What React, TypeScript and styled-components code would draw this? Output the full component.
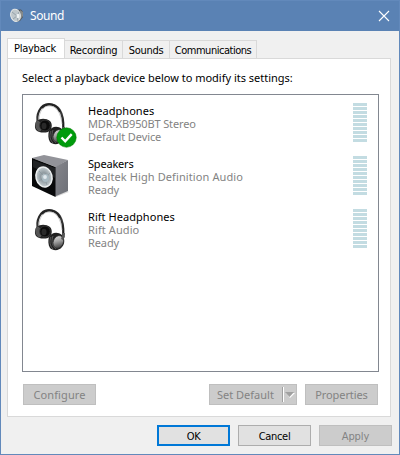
import React from "react";
import styled, { createGlobalStyle } from "styled-components";

const GlobalStyle = createGlobalStyle`
  * { box-sizing: border-box; }
  body { margin: 0; overflow: hidden; }
`;

const Dialog = styled.main`
  width: 400px;
  height: 455px;
  display: flex;
  flex-direction: column;
  border: 1px solid #6289bb;
  background: #f0f0f0;
  color: #000;
  font: 11px/13px "Noto Sans", sans-serif;
`;

const TitleBar = styled.header`
  height: 30px;
  flex: none;
  display: flex;
  align-items: center;
  padding: 0 8px 0 9px;
  background: #5a82b4;
  color: #fff;
`;

const Title = styled.h1`
  flex: 1;
  margin: 0 0 0 6px;
  font: 12px/16px "Noto Sans", sans-serif;
  letter-spacing: -0.4px;
`;

const CloseButton = styled.button`
  width: 14px;
  height: 14px;
  padding: 0;
  border: 0;
  background: none;
  display: grid;
  place-items: center;
`;

const Label = styled.span<{ $spacing?: number }>`
  white-space: nowrap;
  letter-spacing: ${(p) => p.$spacing ?? 0}px;
`;

const Tabs = styled.nav`
  display: flex;
  align-items: flex-end;
  height: 28px;
  flex: none;
  margin: 0 0 -1px 6px;
`;

const Tab = styled.button<{ $width: number; $active?: boolean }>`
  width: ${(p) => p.$width}px;
  height: ${(p) => (p.$active ? 21 : 19)}px;
  padding: ${(p) => (p.$active ? "0 2px 1px 0" : "2px 0 0")};
  text-align: center;
  border: 1px solid #d9d9d9;
  border-left-width: ${(p) => (p.$active ? 1 : 0)}px;
  border-bottom-color: ${(p) => (p.$active ? "#fff" : "#d9d9d9")};
  background: ${(p) => (p.$active ? "#fff" : "#f0f0f0")};
  color: #000;
  font: 11px/13px "DejaVu Sans Condensed", "DejaVu Sans", sans-serif;
`;

const Panel = styled.section`
  width: 384px;
  height: 359px;
  flex: none;
  margin-left: 6px;
  padding: 12px 12px 10px 14px;
  display: flex;
  flex-direction: column;
  border: 1px solid #d9d9d9;
  background: #fff;
`;

const Prompt = styled.p`
  margin: 0 0 10px;
  height: 13px;
`;

const DeviceList = styled.ul`
  width: 357px;
  height: 278px;
  margin: 0;
  padding: 7px 11px 0 8px;
  list-style: none;
  border: 1px solid #828790;
`;

const Device = styled.li`
  display: flex;
  height: 53px;
`;

const DeviceIcon = styled.svg`
  width: 48px;
  height: 48px;
  flex: none;
`;

const DeviceText = styled.div`
  flex: 1;
  display: flex;
  flex-direction: column;
  padding: 2px 0 0 9px;
  color: #838383;
`;

const DeviceName = styled(Label)`
  color: #000;
`;

const Meter = styled.div`
  width: 14px;
  padding-top: 1px;
  display: flex;
  flex-direction: column;
  gap: 1px;
`;

const MeterBar = styled.i`
  height: 3px;
  background: #c3dce2;
`;

const Actions = styled.div`
  display: flex;
  margin: 12px 0 0 1px;
`;

const Button = styled.button<{ $primary?: boolean; $width?: number; $tahoma?: boolean }>`
  width: ${(p) => p.$width ?? 73}px;
  height: 21px;
  padding: ${(p) => (p.$tahoma ? "2px 0 0" : "0")};
  display: flex;
  align-items: center;
  justify-content: center;
  border: ${(p) => (p.$primary ? "2px solid #0078d7" : "1px solid #adadad")};
  background: #e1e1e1;
  color: #000;
  font: 11px/13px ${(p) => (p.$tahoma ? '"DejaVu Sans Condensed", "DejaVu Sans"' : '"Noto Sans"')}, sans-serif;
  &:disabled {
    border-color: #bfbfbf;
    background: #ccc;
    color: #838383;
  }
`;

const SplitButton = styled(Button)`
  margin: 0 8px 0 auto;
  justify-content: flex-start;
  padding-left: 7px;
`;

const SplitMark = styled.svg`
  width: 14px;
  height: 15px;
  margin-left: auto;
`;

const Footer = styled.footer`
  display: flex;
  justify-content: flex-end;
  gap: 8px;
  padding: 8px 7px 0 0;
`;

function SoundIcon() {
  return (
    <svg width="14" height="16" viewBox="0 0 14 16">
      <path d="M5 2 11 1.5 13 4v5L10 13 6 14Z" fill="#4e5356" />
      <path d="m10 2 3 2v4l-3 4Z" fill="#85898a" />
      <ellipse cx="5.5" cy="7.3" rx="4.8" ry="6.2" transform="rotate(-14 5.5 7.3)" fill="#bfc7cb" stroke="#e4e6e5" />
      <path d="m2 4 5 4-4 3M7 8l2-4M7 8l1 5" stroke="#95a2aa" fill="none" />
      <ellipse cx="8" cy="8" rx="1.5" ry="2.3" fill="#edf1f2" />
    </svg>
  );
}

function Headphones({ checked }: { checked?: boolean }) {
  const id = checked ? "checked" : "plain";
  return (
    <DeviceIcon viewBox="0 0 48 48">
      <defs>
        <linearGradient id={`band-${id}`} x2="1" y2="1">
          <stop stopColor="#171717" />
          <stop offset=".5" stopColor="#484848" />
          <stop offset="1" stopColor="#161616" />
        </linearGradient>
        <linearGradient id={`cup-${id}`} x2=".6" y2="1">
          <stop stopColor="#e8e8e8" />
          <stop offset=".5" stopColor="#a6a6a6" />
          <stop offset="1" stopColor="#444" />
        </linearGradient>
      </defs>
      <path d="M7.2 22C4.500 13 9 2 18 2c9 0 15 8 14.300 25" fill="none" stroke={`url(#band-${id})`} strokeWidth="2.200" />
      <path d="M11 6c5-6 15-4 18 4" fill="none" stroke="#222" strokeWidth="2" />
      <path d="M8.500 21C7 13 10 5 17 4c8-1 13 7 14 18" fill="none" stroke="#999" strokeWidth=".5" />
      <path d="M6 19c3-3 9-3 13 0 3 3 2 9-2 11-4 1-9 1-12-2-2-3-1-7 1-9Z" fill="#222" />
      <ellipse cx="7.500" cy="24" rx="3" ry="5.500" transform="rotate(-15 7.5 24)" fill="#555" />
      <ellipse cx="14" cy="23.500" rx="5.300" ry="5.500" fill="#0b0b0b" stroke="#333" />
      <ellipse cx="13" cy="24" rx="2.500" ry="3.200" fill="#292929" />
      <path d="M18 29c2-4 8-6 13-2 3 3 3 9 0 12-3 4-9 4-12 1-2-3-2-8-1-11Z" fill="#202020" />
      <path d="M20 29c-2 4-1 9 2 12M22 28c-2 5-1 10 3 13" fill="none" stroke="#686868" strokeWidth=".8" />
      <ellipse cx="27.300" cy="34" rx="5" ry="6.500" transform="rotate(22 27.3 34)" fill={`url(#cup-${id})`} stroke="#303030" strokeWidth=".6" />
      <path d="M31.500 25h2.400v4l-2 3-1.800-1Z" fill="#555" />
      {checked && (
        <g>
          <circle cx="35.500" cy="35.500" r="9.700" fill="#009b0c" stroke="#008000" strokeWidth=".6" />
          <path d="m30.500 35.500 3.700 3.800 6.500-7.200" fill="none" stroke="#fff" strokeWidth="2.400" />
        </g>
      )}
    </DeviceIcon>
  );
}

function Speaker() {
  return (
    <DeviceIcon viewBox="0 0 48 48">
      <defs>
        <linearGradient id="speaker-side" x2="1" y2="1">
          <stop stopColor="#85868c" />
          <stop offset="1" stopColor="#6e7077" />
        </linearGradient>
        <radialGradient id="cone">
          <stop stopColor="#edf1f2" />
          <stop offset=".4" stopColor="#8d989e" />
          <stop offset="1" stopColor="#c7cfd2" />
        </radialGradient>
      </defs>
      <path d="m24 41 12-5 2 1-13 5Z" fill="#ddd" />
      <path d="m1 3 12-3 24 5-12 7Z" fill="#929399" />
      <path d="m24 12 13-7v31l-13 5.500Z" fill="url(#speaker-side)" />
      <path d="m1 3 23.500 9v30L1 31Z" fill="#08090a" />
      <path d="m2 5 22 8v10L2 12Z" fill="#202224" />
      <ellipse cx="13" cy="22" rx="8" ry="10" transform="rotate(-14 13 22)" fill="url(#cone)" stroke="#edf0f1" strokeWidth="1.500" />
      <path d="m8 16 6 6-6 4M14 24l5-6M14 24l2 6" fill="none" stroke="#87949b" strokeWidth=".7" />
      <ellipse cx="14.500" cy="23" rx="3.500" ry="4" fill="#a9bac2" />
      <ellipse cx="14" cy="22" rx="1.900" ry="2" fill="#e1e9ed" />
    </DeviceIcon>
  );
}

const devices = [
  { name: "Headphones", model: "MDR-XB950BT Stereo", status: "Default Device", icon: <Headphones checked />, spacing: [0.05, -0.15, -0.1] },
  { name: "Speakers", model: "Realtek High Definition Audio", status: "Ready", icon: <Speaker />, spacing: [-0.2, 0.1, -0.1] },
  { name: "Rift Headphones", model: "Rift Audio", status: "Ready", icon: <Headphones />, spacing: [0.05, 0.1, -0.1] },
];

export default function App() {
  return (
    <>
      <GlobalStyle />
      <Dialog>
        <TitleBar>
          <SoundIcon />
          <Title>Sound</Title>
          <CloseButton aria-label="Close">
            <svg width="12" height="12" viewBox="0 0 12 12">
              <path d="m1 1 10 10M11 1 1 11" stroke="#fff" strokeWidth="1.100" />
            </svg>
          </CloseButton>
        </TitleBar>
        <Tabs>
          <Tab $width={58} $active><Label $spacing={-0.3}>Playback</Label></Tab>
          <Tab $width={58}><Label $spacing={-0.2}>Recording</Label></Tab>
          <Tab $width={47}><Label $spacing={-0.3}>Sounds</Label></Tab>
          <Tab $width={87}><Label $spacing={-0.48}>Communications</Label></Tab>
        </Tabs>
        <Panel>
          <Prompt><Label $spacing={-0.01}>Select a playback device below to modify its settings:</Label></Prompt>
          <DeviceList>
            {devices.map((d) => (
              <Device key={d.name}>
                {d.icon}
                <DeviceText>
                  <DeviceName $spacing={d.spacing[0]}>{d.name}</DeviceName>
                  <Label $spacing={d.spacing[1]}>{d.model}</Label>
                  <Label $spacing={d.spacing[2]}>{d.status}</Label>
                </DeviceText>
                <Meter>{Array.from({ length: 10 }, (_, i) => <MeterBar key={i} />)}</Meter>
              </Device>
            ))}
          </DeviceList>
          <Actions>
            <Button disabled><Label $spacing={0.1}>Configure</Label></Button>
            <SplitButton disabled $width={88}>
              <Label $spacing={0}>Set Default</Label>
              <SplitMark viewBox="0 0 14 15">
                <path d="M.5 0v15" stroke="#a0a0a0" />
                <path d="M1.500 0v15" stroke="#fff" />
                <path d="m4 6 9 0-5 5Z" fill="#fff" />
                <path d="M3 5h9L7.500 10Z" fill="#a0a0a0" />
              </SplitMark>
            </SplitButton>
            <Button disabled><Label $spacing={-0.1}>Properties</Label></Button>
          </Actions>
        </Panel>
        <Footer>
          <Button $primary $tahoma><Label $spacing={-0.3}>OK</Label></Button>
          <Button $tahoma><Label $spacing={-0.3}>Cancel</Label></Button>
          <Button $tahoma disabled><Label $spacing={-0.1}>Apply</Label></Button>
        </Footer>
      </Dialog>
    </>
  );
}
